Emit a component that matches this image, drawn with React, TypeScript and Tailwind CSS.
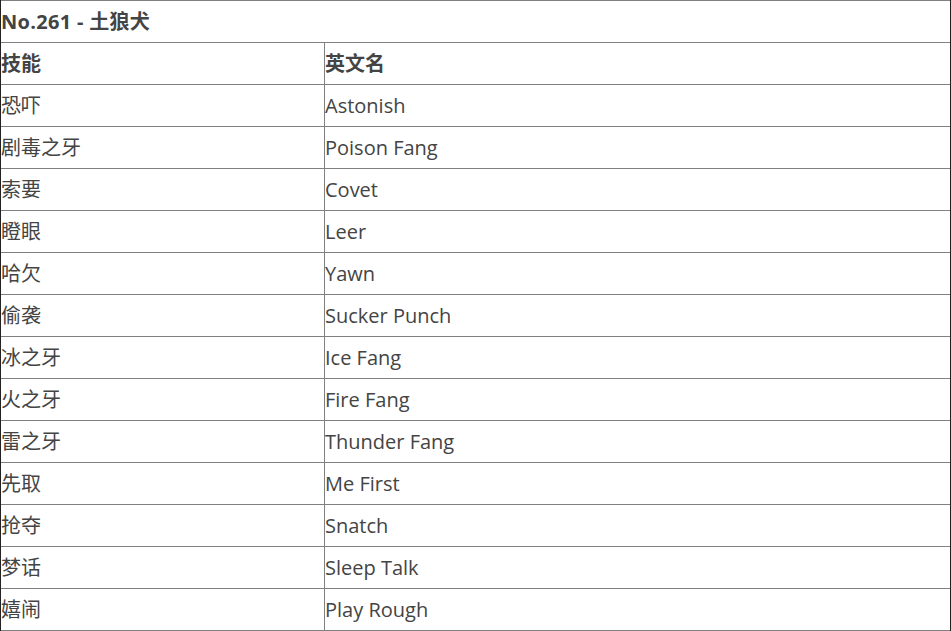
const ROWS: [string, string][] = [
  ['恐吓', 'Astonish'],
  ['剧毒之牙', 'Poison Fang'],
  ['索要', 'Covet'],
  ['瞪眼', 'Leer'],
  ['哈欠', 'Yawn'],
  ['偷袭', 'Sucker Punch'],
  ['冰之牙', 'Ice Fang'],
  ['火之牙', 'Fire Fang'],
  ['雷之牙', 'Thunder Fang'],
  ['先取', 'Me First'],
  ['抢夺', 'Snatch'],
  ['梦话', 'Sleep Talk'],
  ['嬉闹', 'Play Rough'],
];

const font = { fontFamily: '"Open Sans", "Noto Sans CJK SC", sans-serif' };

export default function App() {
  return (
    <div className="w-[951px] h-[631px] bg-white overflow-hidden" style={font}>
      <div className="border-l border-r border-[#222]">
        {/* title */}
        <div className="h-[42px] border-t border-[#808080] flex items-center text-[20px] font-bold text-[#444] tracking-[0.3px]">
          No.261 - 土狼犬
        </div>
        {/* header */}
        <div className="h-[42px] border-t border-[#808080] flex text-[20px] font-bold text-[#444]">
          <div className="w-[324px] flex items-center border-r border-[#808080]">技能</div>
          <div className="flex-1 flex items-center">英文名</div>
        </div>
        {ROWS.map(([cn, en], i) => (
          <div
            key={i}
            className={`border-t border-[#808080] flex text-[20px] text-[#444] ${i === ROWS.length - 1 ? 'border-b h-[43px]' : 'h-[42px]'}`}
          >
            <div className="w-[324px] flex items-center border-r border-[#808080]">{cn}</div>
            <div className="flex-1 flex items-center">{en}</div>
          </div>
        ))}
      </div>
    </div>
  );
}
